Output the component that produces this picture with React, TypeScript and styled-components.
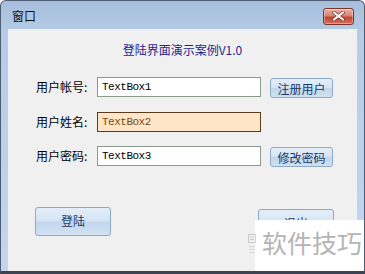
import styled, { createGlobalStyle } from "styled-components";

// Global
const GlobalStyle = createGlobalStyle`
  html, body {
    margin: 0;
    padding: 0;
    background: #ffffff;
  }
  body {
    font-family: "Noto Sans CJK SC", "Liberation Sans", sans-serif;
    font-size: 12px;
  }
`;

// Styled
const Window = styled.div`
  position: relative;
  width: 365px;
  height: 274px;
  box-sizing: border-box;
  display: flex;
  flex-direction: column;
  border: 1px solid #4d5c70;
  border-bottom: 3px solid #3b4450;
  border-radius: 6px 6px 0 0;
  background: linear-gradient(180deg, #a7bfdc 0%, #b6cce6 12%, #c3d6ee 100%);
  overflow: hidden;
`;

const TitleBar = styled.div`
  height: 28px;
  flex: none;
  display: flex;
  align-items: center;
  justify-content: space-between;
  padding: 0 10px 0 11px;
`;

const TitleText = styled.span`
  font-size: 12px;
  color: #111;
  line-height: 14px;
  margin-top: 2px;
`;

const CloseButton = styled.button`
  width: 31px;
  height: 17px;
  margin-top: 2px;
  padding: 0;
  display: flex;
  align-items: center;
  justify-content: center;
  border: 1px solid #7c3328;
  border-radius: 3px;
  background: linear-gradient(180deg, #e9b3a6 0%, #d88372 45%, #c2452f 55%, #d0705c 100%);
  box-shadow: inset 0 0 0 1px rgba(255, 255, 255, 0.35);
`;

const Content = styled.div`
  flex: 1;
  margin: 0 7px;
  background: #f0f0f0;
  display: flex;
  flex-direction: column;
`;

const Heading = styled.div`
  margin-top: 13px;
  height: 16px;
  line-height: 16px;
  text-align: center;
  color: #1f1f8f;
  font-size: 12px;
`;

const FormGrid = styled.div`
  margin-top: 19px;
  padding-left: 28px;
  display: grid;
  grid-template-columns: 61px 173px 63px;
  row-gap: 14.5px;
  grid-auto-rows: 20px;
`;

const Label = styled.span`
  font-size: 12px;
  line-height: 20px;
  color: #000;
  white-space: nowrap;
`;

const TextBox = styled.div<{ $active?: boolean }>`
  box-sizing: border-box;
  width: 164px;
  height: 20px;
  padding: 0 4px;
  display: flex;
  align-items: center;
  font-family: "Liberation Mono", monospace;
  font-size: 11px;
  letter-spacing: -0.5px;
  color: ${(p) => (p.$active ? "#7a4a10" : "#000")};
  background: ${(p) => (p.$active ? "#ffe5c8" : "#ffffff")};
  border: 1px solid ${(p) => (p.$active ? "#5e3a1c" : "#8a9a8c")};
`;

const SmallButton = styled.button`
  box-sizing: border-box;
  height: 20px;
  margin-top: 1px;
  padding: 0;
  font-family: "Noto Sans CJK SC", sans-serif;
  font-size: 12px;
  color: #1d3b66;
  border: 1px solid #8fa9c8;
  border-radius: 3px;
  background: linear-gradient(180deg, #e4eef9 0%, #d5e4f4 48%, #c3d6ec 52%, #cfe0f2 100%);
`;

const Footer = styled.div`
  margin-top: 41px;
  padding: 0 23px 0 27px;
  display: flex;
  justify-content: space-between;
  align-items: flex-start;
`;

const BigButton = styled.button<{ $offset?: number }>`
  box-sizing: border-box;
  width: 76px;
  height: 29px;
  margin-top: ${(p) => p.$offset ?? 0}px;
  padding: 0 0 3px;
  font-family: "Noto Sans CJK SC", sans-serif;
  font-size: 12px;
  color: #1d3b66;
  border: 1px solid #8fa9c8;
  border-radius: 3px;
  background: linear-gradient(180deg, #e4eef9 0%, #d5e4f4 48%, #c3d6ec 52%, #d2e2f3 100%);
`;

const Watermark = styled.div`
  position: absolute;
  left: 254px;
  top: 219px;
  width: 111px;
  height: 55px;
  background: #ffffff;
  display: flex;
  align-items: flex-start;
  padding: 7px 0 0 7px;
  box-sizing: border-box;
`;

const WatermarkIcon = styled.div`
  position: absolute;
  left: -7px;
  top: 14px;
  width: 8px;
  height: 22px;
  opacity: 0.35;
`;

const WatermarkText = styled.span`
  font-size: 25px;
  line-height: 30px;
  color: #b4b4b4;
`;

const rows = [
  { label: "用户帐号:", value: "TextBox1", button: "注册用户" },
  { label: "用户姓名:", value: "TextBox2", active: true },
  { label: "用户密码:", value: "TextBox3", button: "修改密码" },
];

const App = () => {
  return (
    <>
      <GlobalStyle />
      <Window>
        <TitleBar>
          <TitleText>窗口</TitleText>
          <CloseButton>
            <svg width="13" height="10" viewBox="0 0 13 10">
              <path
                d="M2 1.5 L11 8.5 M11 1.5 L2 8.5"
                stroke="#6a2a20"
                strokeWidth="3.4"
                strokeLinecap="square"
              />
              <path
                d="M2 1.5 L11 8.5 M11 1.5 L2 8.5"
                stroke="#ffffff"
                strokeWidth="2"
                strokeLinecap="square"
              />
            </svg>
          </CloseButton>
        </TitleBar>
        <Content>
          <Heading>登陆界面演示案例V1.0</Heading>
          <FormGrid>
            {rows.map((row) => [
              <Label key={row.label + "l"}>{row.label}</Label>,
              <TextBox key={row.label + "t"} $active={row.active}>
                {row.value}
              </TextBox>,
              row.button ? (
                <SmallButton key={row.label + "b"}>{row.button}</SmallButton>
              ) : (
                <span key={row.label + "b"} />
              ),
            ])}
          </FormGrid>
          <Footer>
            <BigButton>登陆</BigButton>
            <BigButton $offset={2}>退出</BigButton>
          </Footer>
        </Content>
        <Watermark>
          <WatermarkIcon>
            <svg width="8" height="22" viewBox="0 0 8 22">
              <rect x="0.5" y="0.5" width="7" height="8" fill="none" stroke="#888" />
              <rect x="2" y="2.5" width="4" height="1" fill="#888" />
              <rect x="2" y="5" width="4" height="1" fill="#888" />
              <rect x="1" y="12" width="6" height="1" fill="#aaa" />
              <rect x="1" y="15" width="6" height="1" fill="#aaa" />
              <rect x="1" y="18" width="6" height="1" fill="#aaa" />
            </svg>
          </WatermarkIcon>
          <WatermarkText>软件技巧</WatermarkText>
        </Watermark>
      </Window>
    </>
  );
};

export default App;
